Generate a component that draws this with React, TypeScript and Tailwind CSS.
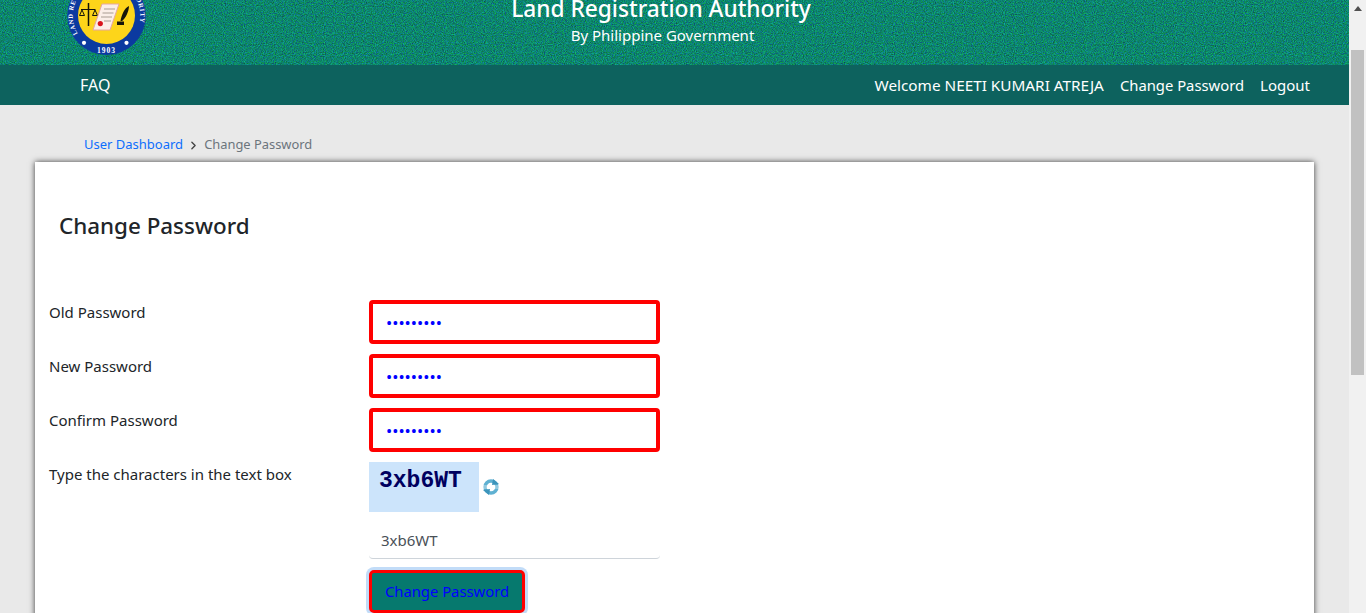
import { ChevronRight } from "lucide-react";

const font = { fontFamily: '"Noto Sans", "Open Sans", sans-serif' };

// round seal, top part is cut off by the scrolled page
const Seal = () => (
  <svg width="80" height="56" viewBox="0 0 80 56" className="block">
    <circle cx="40.5" cy="15.7" r="39.3" fill="#0b3aa0" />
    <circle cx="40.5" cy="15.5" r="28.5" fill="#fdd51a" />
    <defs>
      <path id="ring" d="M40.5 49.5a33.8 33.8 0 1 1 .01 0" />
    </defs>
    <text fill="#fff" fontSize="6.6" fontWeight="700" fontFamily="Liberation Serif, serif" letterSpacing="0.7">
      <textPath href="#ring" startOffset="16%">LAND REGISTRATION AUTHORITY</textPath>
    </text>
    <g stroke="#15150a" fill="none">
      <path d="M22.5 3v23" strokeWidth="1.5" />
      <path d="M15 9.5h14.5M16 10l-2.5 5.5h5zM29 10l-2.5 5.5h5z" strokeWidth="1" />
    </g>
    <path d="M36 4h17l-9 26H27z" fill="#fbeee8" stroke="#e6a79e" strokeWidth="1" />
    <path d="M38 9h11M36.5 13h11M35 17h11M38 21h7" stroke="#a99c92" strokeWidth="1" />
    <circle cx="34.3" cy="23.6" r="2.6" fill="#d8141c" />
    <path d="M63 6c-4.5 2-7.5 9-8.5 15h1.6c3.6-3 6.8-9.5 6.9-15zM51 21.5h7v3.5h-7z" fill="#15150a" />
    <circle cx="18" cy="42.8" r="2.1" fill="#fff" />
    <circle cx="60.5" cy="42.8" r="2.1" fill="#fff" />
    <text x="40.5" y="52.5" textAnchor="middle" fill="#fff" fontSize="7.5" fontWeight="700" fontFamily="Liberation Serif, serif" letterSpacing="1">1903</text>
  </svg>
);

const Noise = () => (
  <svg className="absolute inset-0 h-full w-full" aria-hidden="true">
    <filter id="grain" x="0" y="0" width="100%" height="100%" colorInterpolationFilters="sRGB">
      <feTurbulence type="fractalNoise" baseFrequency="0.9" numOctaves="2" seed="4" />
      <feColorMatrix
        type="matrix"
        values="0 0 0 0 0.05
                0.6 0 0 0 0.22
                0 0.7 0 0 0.08
                0 0 0 0 1"
      />
    </filter>
    <rect width="100%" height="100%" filter="url(#grain)" />
  </svg>
);

const Field = ({ label }: { label: string }) => (
  <div className="flex h-[54px] items-start">
    <label className="w-[320px] pt-[1px] text-[15px] leading-[22px] text-[#212529]">{label}</label>
    <input
      type="password"
      defaultValue="123456789"
      readOnly
      className="h-[44px] w-[291px] rounded-[4px] border-[4px] border-[#ff0000] bg-white px-[13px] text-[16.5px] text-[#0000ff] outline-none"
    />
  </div>
);

export default function App() {
  return (
    <div className="flex h-[613px] w-[1366px] overflow-hidden bg-[#e9e9e9]" style={font}>
      <div className="w-[1349px]">
        <header className="relative h-[65px] overflow-hidden bg-[#0b7a62]">
          <Noise />
          <div className="relative flex h-full">
            <div className="ml-[66px] w-[80px]">
              <Seal />
            </div>
            <div className="ml-[365px] w-[300px] text-center text-white">
              <h1 className="mt-[-7px] whitespace-nowrap text-[22.7px] font-medium leading-[32px]">Land Registration Authority</h1>
              <p className="whitespace-nowrap pl-[3px] text-[15px] leading-[20px]">By Philippine Government</p>
            </div>
          </div>
        </header>

        <nav className="flex h-[40px] items-center justify-between bg-[#0d625e] pl-[80px] pr-[39px] text-white">
          <a className="text-[16px]">FAQ</a>
          <div className="flex items-center gap-4">
            <a className="text-[15.3px]">Welcome NEETI KUMARI ATREJA</a>
            <a className="text-[14.8px]">Change Password</a>
            <a className="text-[15px]">Logout</a>
          </div>
        </nav>

        <div className="flex h-[57px] items-center pl-[84px] pt-[23px] text-[13px] text-[#6c757d]">
          <a className="text-[#0d6efd]">User Dashboard</a>
          <ChevronRight size={13} strokeWidth={2.5} className="ml-[4px] mr-[4px] text-[#444]" />
          <span className="text-[12.9px]">Change Password</span>
        </div>

        <main className="mx-[35px] h-[470px] bg-white pl-[14px] shadow-[0_0_6px_rgba(0,0,0,0.75)]">
          <h2 className="pl-[10px] pt-[47px] text-[22.4px] font-medium leading-[34px] text-[#212529]">Change Password</h2>
          <div className="pt-[57px]">
            <Field label="Old Password" />
            <Field label="New Password" />
            <Field label="Confirm Password" />
            <div className="flex">
              <label className="w-[320px] pt-[1px] text-[15px] leading-[22px] text-[#212529]">Type the characters in the text box</label>
              <div className="w-[291px]">
                <div className="flex items-center">
                  <div className="h-[50px] w-[110px] bg-[#cce4fb] pl-[10px] pt-[6px] font-['Liberation_Mono',monospace] text-[23px] font-bold leading-[26px] text-[#00005f]">
                    3xb6WT
                  </div>
                  {/* refresh icon */}
                  <svg width="18" height="18" viewBox="0 0 18 18" className="ml-[3px] mt-[-1px]">
                    <circle cx="9" cy="9" r="6" fill="none" stroke="#5fb1d2" strokeWidth="3.4" />
                    <path d="M11 1l6 5-7 1zM7 17l-6-5 7-1z" fill="#3c94bb" />
                    <path d="M0 8h18M0 10h18" stroke="#fff" strokeWidth="0.8" opacity="0.8" />
                  </svg>
                </div>
                <input
                  defaultValue="3xb6WT"
                  readOnly
                  className="mt-[10px] block h-[37px] w-full rounded-[4px] border-b border-[#ced4da] bg-white px-[12px] text-[15px] text-[#495057] outline-none"
                />
                <button className="mt-[11px] h-[43px] w-[156px] rounded-[5px] border-[3px] border-[#ff0000] bg-[#06796e] text-[14.8px] text-[#0000ff] shadow-[0_0_0_3px_#c2dcf8]">
                  Change Password
                </button>
              </div>
            </div>
          </div>
        </main>
      </div>

      {/* browser scrollbar */}
      <div className="relative w-[17px] bg-[#f1f1f1]">
        <div className="mx-auto mt-[6px] h-0 w-0 border-x-[4px] border-b-[5px] border-x-transparent border-b-[#505050]" />
        <div className="mx-auto mt-[39px] h-[325px] w-[13px] bg-[#c1c1c1]" />
      </div>
    </div>
  );
}
